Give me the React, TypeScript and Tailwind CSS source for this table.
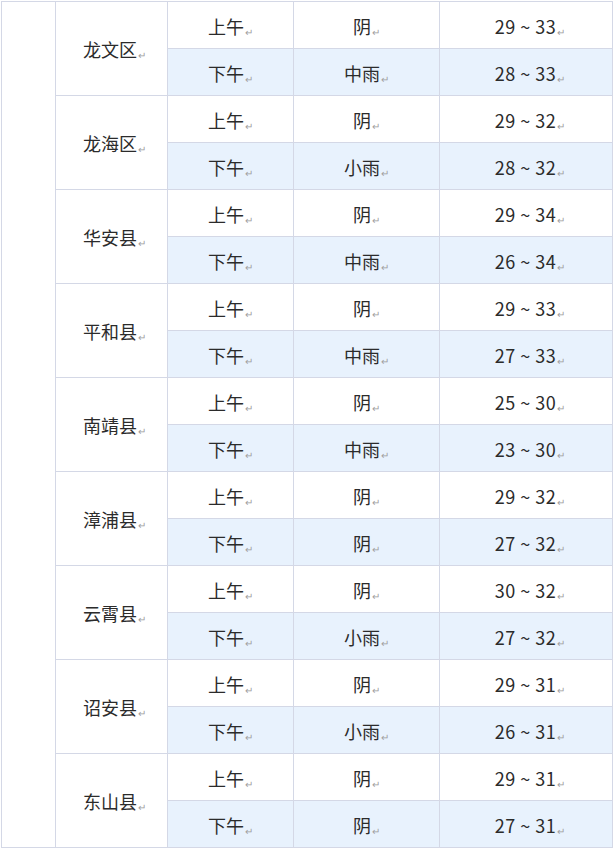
import React from 'react';

type Row = { time: string; weather: string; temp: string };
type District = { name: string; rows: Row[] };

const districts: District[] = [
  { name: '龙文区', rows: [{ time: '上午', weather: '阴', temp: '29 ~ 33' }, { time: '下午', weather: '中雨', temp: '28 ~ 33' }] },
  { name: '龙海区', rows: [{ time: '上午', weather: '阴', temp: '29 ~ 32' }, { time: '下午', weather: '小雨', temp: '28 ~ 32' }] },
  { name: '华安县', rows: [{ time: '上午', weather: '阴', temp: '29 ~ 34' }, { time: '下午', weather: '中雨', temp: '26 ~ 34' }] },
  { name: '平和县', rows: [{ time: '上午', weather: '阴', temp: '29 ~ 33' }, { time: '下午', weather: '中雨', temp: '27 ~ 33' }] },
  { name: '南靖县', rows: [{ time: '上午', weather: '阴', temp: '25 ~ 30' }, { time: '下午', weather: '中雨', temp: '23 ~ 30' }] },
  { name: '漳浦县', rows: [{ time: '上午', weather: '阴', temp: '29 ~ 32' }, { time: '下午', weather: '阴', temp: '27 ~ 32' }] },
  { name: '云霄县', rows: [{ time: '上午', weather: '阴', temp: '30 ~ 32' }, { time: '下午', weather: '小雨', temp: '27 ~ 32' }] },
  { name: '诏安县', rows: [{ time: '上午', weather: '阴', temp: '29 ~ 31' }, { time: '下午', weather: '小雨', temp: '26 ~ 31' }] },
  { name: '东山县', rows: [{ time: '上午', weather: '阴', temp: '29 ~ 31' }, { time: '下午', weather: '阴', temp: '27 ~ 31' }] },
];

// Word's paragraph mark after each cell's text
function Mark() {
  return <span className="ml-[1px] align-[-2px] text-[10px] text-[#a0a0a0]">↵</span>;
}

const cell = 'border border-[#d4d8e6] pt-[3px] text-center align-middle text-[18px] leading-none text-[#2b2b2b]';

export default function App() {
  return (
    <div className="h-[848px] w-[613px] overflow-hidden bg-white pt-[1px] pl-[1px]" style={{ fontFamily: '"Noto Sans CJK SC", "Noto Sans", sans-serif' }}>
      <table className="w-[611px] table-fixed border-collapse">
        <colgroup>
          <col className="w-[54px]" />
          <col className="w-[112px]" />
          <col className="w-[126px]" />
          <col className="w-[146px]" />
          <col className="w-[173px]" />
        </colgroup>
        <tbody>
          {districts.map((d, di) =>
            d.rows.map((r, ri) => (
              <tr key={d.name + r.time} className={ri === 1 ? 'h-[47px] bg-[#e8f2fd]' : 'h-[47px] bg-white'}>
                {di === 0 && ri === 0 && <td rowSpan={18} className="border border-[#d4d8e6] bg-white" />}
                {ri === 0 && (
                  <td rowSpan={2} className={`${cell} bg-white pl-[6px]`}>
                    {d.name}
                    <Mark />
                  </td>
                )}
                <td className={cell}>
                  {r.time}
                  <Mark />
                </td>
                <td className={cell}>
                  {r.weather}
                  <Mark />
                </td>
                <td className={cell}>
                  <span className="pl-[8px] tracking-[0.5px]">{r.temp}</span>
                  <Mark />
                </td>
              </tr>
            ))
          )}
        </tbody>
      </table>
    </div>
  );
}
